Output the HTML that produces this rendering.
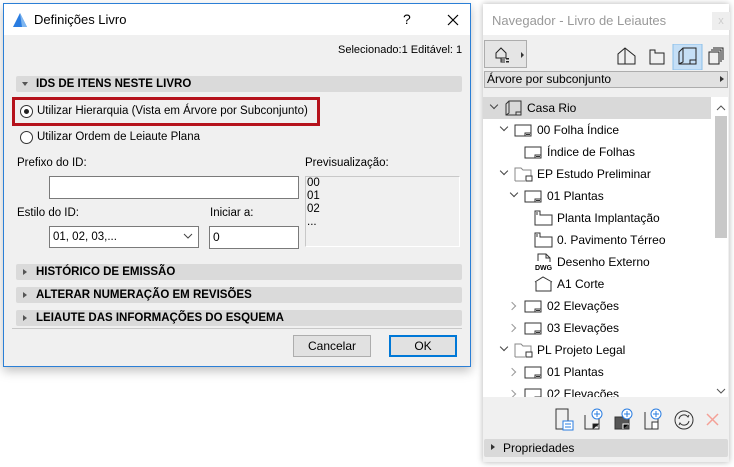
<!DOCTYPE html>
<html><head><meta charset="utf-8"><style>
*{margin:0;padding:0;box-sizing:border-box}
body{width:734px;height:467px;background:#fff;position:relative;overflow:hidden;font-family:"Liberation Sans",sans-serif;font-size:12px;color:#000}
.a{position:absolute}
.dl{font-size:11.5px}
.sec{position:absolute;left:16px;width:446px;height:16px;background:#dadada;border-radius:2px;font-weight:bold;font-size:11.5px;line-height:16px;padding-left:20px}
.sec:before{content:"";position:absolute;left:7px;top:5px;border-left:4px solid #555;border-top:3px solid transparent;border-bottom:3px solid transparent}
.sec.open:before{left:6px;top:6px;border-top:4px solid #555;border-left:3px solid transparent;border-right:3px solid transparent;border-bottom:0}
.inp{position:absolute;background:#fff;border:1px solid #7a7a7a}
.row{position:absolute;left:0;height:22px;line-height:22px;white-space:nowrap}
.chev{position:absolute;top:7px;width:6px;height:6px;border-right:1.3px solid #444;border-bottom:1.3px solid #444}
.dn{transform:rotate(45deg)}
.rt{transform:rotate(-45deg);border-color:#999}
</style></head><body>
<div class="a" style="left:3px;top:3px;width:468px;height:364px;border:1px solid #2b7fd6;background:#f0f0f0;box-shadow:0 4px 10px rgba(0,0,0,.25)">
 <div class="a" style="left:0;top:0;width:466px;height:31px;background:#fff"></div>
 <svg class="a" style="left:8px;top:8px" width="16" height="16"><path d="M1 15 L8 1 L15 15 Z" fill="#2a7de1"/><path d="M8 1 L15 15 L10 15 Z" fill="#7fb6f0"/></svg>
 <div class="a" style="left:30px;top:8px;font-size:13px">Definições Livro</div>
 <div class="a" style="left:399px;top:7px;font-size:14px">?</div>
 <svg class="a" style="left:443px;top:10px" width="12" height="12"><path d="M1 1L11 11M11 1L1 11" stroke="#000" stroke-width="1.2"/></svg>
</div>
<div class="a dl" style="left:338px;top:44px;font-size:11px">Selecionado:1 Editável: 1</div>
<div class="sec open" style="top:76px">IDS DE ITENS NESTE LIVRO</div>
<div class="a" style="left:12px;top:97px;width:308px;height:29px;border:3px solid #b5121b"></div>
<div class="a" style="left:20px;top:105px;width:13px;height:13px;border:1px solid #333;border-radius:50%;background:#fff"><div class="a" style="left:3px;top:3px;width:5px;height:5px;border-radius:50%;background:#222"></div></div>
<div class="a dl" style="left:37px;top:105px">Utilizar Hierarquia (Vista em Árvore por Subconjunto)</div>
<div class="a" style="left:20px;top:131px;width:13px;height:13px;border:1px solid #333;border-radius:50%;background:#fff"></div>
<div class="a dl" style="left:37px;top:131px">Utilizar Ordem de Leiaute Plana</div>
<div class="a dl" style="left:17px;top:157px">Prefixo do ID:</div>
<div class="a dl" style="left:305px;top:157px">Previsualização:</div>
<div class="inp" style="left:49px;top:176px;width:250px;height:23px"></div>
<div class="a" style="left:305px;top:176px;width:155px;height:71px;border:1px solid #c8c8c8;border-right-color:#fff;border-bottom-color:#fff;line-height:13px;padding-left:1px;font-size:11.5px">00<br>01<br>02<br>...</div>
<div class="a dl" style="left:17px;top:207px">Estilo do ID:</div>
<div class="a dl" style="left:210px;top:207px">Iniciar a:</div>
<div class="inp" style="left:49px;top:226px;width:150px;height:22px;line-height:20px;padding-left:3px;font-size:11.5px">01, 02, 03,...</div>
<svg class="a" style="left:183px;top:233px" width="10" height="6"><path d="M1 1L5 5L9 1" stroke="#444" fill="none"/></svg>
<div class="inp" style="left:209px;top:226px;width:90px;height:23px;line-height:21px;padding-left:3px">0</div>
<div class="sec" style="top:264px">HISTÓRICO DE EMISSÃO</div>
<div class="sec" style="top:287px">ALTERAR NUMERAÇÃO EM REVISÕES</div>
<div class="sec" style="top:310px">LEIAUTE DAS INFORMAÇÕES DO ESQUEMA</div>
<div class="a" style="left:12px;top:328px;width:450px;height:1px;background:#c8c8c8"></div>
<div class="a" style="left:293px;top:335px;width:78px;height:22px;border:1px solid #adadad;background:#e1e1e1;text-align:center;line-height:20px">Cancelar</div>
<div class="a" style="left:389px;top:335px;width:68px;height:22px;border:2px solid #0078d7;background:#e1e1e1;text-align:center;line-height:18px">OK</div>

<div class="a" style="left:483px;top:4px;width:246px;height:458px;background:#f0f0f0;box-shadow:0 0 6px rgba(0,0,0,.3)">
 <div class="a" style="left:0;top:0;width:246px;height:31px;background:#fff"></div>
 <div class="a" style="left:9px;top:9px;font-size:13px;color:#999">Navegador - Livro de Leiautes</div>
 <div class="a" style="left:229px;top:8px;width:18px;height:18px;background:#eee;color:#ccc;text-align:center;font-size:11px;line-height:18px">x</div>
 <div class="a" style="left:1px;top:36px;width:43px;height:28px;border:1px solid #adadad;background:#e5e5e5"></div>
 <svg class="a" style="left:10px;top:41px" width="32" height="20"><path d="M3 8L8 3L13 8V13H3Z M8 13V17H12 M8 15H12" stroke="#222" fill="none"/><rect x="13" y="13" width="3" height="1.5" fill="#222"/><rect x="13" y="16" width="3" height="1.5" fill="#222"/><path d="M28 7L31 10L28 13Z" fill="#333"/></svg>
 <svg class="a" style="left:132px;top:40px" width="110" height="26"><path d="M3 20V10L10 4L20 12V20Z M10 4V20" stroke="#222" fill="none"/><path d="M35 6H40V9H49V20H35Z" stroke="#222" fill="none"/><rect x="58" y="0" width="29" height="26" fill="#c5dff6" stroke="#8cbfe9"/><path d="M64 20V8L68 4H81V20Z M68 4V18L64 20 M75 20V16H81" stroke="#222" fill="none"/><path d="M94 8H104V20H94Z M96 6H106V18 M98 4H108V16" stroke="#222" fill="none"/></svg>
 <div class="a" style="left:1px;top:67px;width:244px;height:17px;border:1px solid #adadad;background:#e1e1e1;line-height:15px;padding-left:2px">Árvore por subconjunto</div>
 <div class="a" style="left:237px;top:72px;border-left:4px solid #333;border-top:3.5px solid transparent;border-bottom:3.5px solid transparent"></div>
 <div class="a" style="left:0;top:93px;width:230px;height:300px;background:#fff;overflow:hidden">
  <div class="a" style="left:0;top:0;width:228px;height:22px;background:#d9d9d9"></div>
  <div class="row" style="top:0;left:0;width:230px">
   <i class="chev dn" style="left:8px;top:5px"></i>
   <svg class="a" style="left:22px;top:3px" width="18" height="16"><path d="M1 15V4L4 1H16V15Z M4 1V13L1 15 M11 15V12H16" stroke="#333" fill="none"/></svg>
   <span class="a" style="left:44px">Casa Rio</span></div>
  <div class="row" style="top:22px"><i class="chev dn" style="left:18px;top:5px"></i><svg class="a" style="left:31px;top:5px" width="18" height="13"><path d="M1 1H17V12H1Z M11 12V9H17 M12 10.5H16" stroke="#333" fill="none"/></svg><span class="a" style="left:54px">00 Folha Índice</span></div>
  <div class="row" style="top:44px"><svg class="a" style="left:41px;top:5px" width="18" height="13"><path d="M1 1H17V12H1Z M11 12V9H17 M12 10.5H16" stroke="#333" fill="none"/></svg><span class="a" style="left:64px">Índice de Folhas</span></div>
  <div class="row" style="top:66px"><i class="chev dn" style="left:18px;top:5px"></i><svg class="a" style="left:31px;top:3px" width="20" height="16"><path d="M1 15V2H7L9 4H17V10 M1 15H11" stroke="#888" fill="none"/><rect x="12" y="10" width="6" height="5" stroke="#333" fill="none"/></svg><span class="a" style="left:54px">EP Estudo Preliminar</span></div>
  <div class="row" style="top:88px"><i class="chev dn" style="left:28px;top:5px"></i><svg class="a" style="left:41px;top:5px" width="18" height="13"><path d="M1 1H17V12H1Z M11 12V9H17 M12 10.5H16" stroke="#333" fill="none"/></svg><span class="a" style="left:64px">01 Plantas</span></div>
  <div class="row" style="top:110px"><svg class="a" style="left:51px;top:3px" width="20" height="16"><path d="M1 1H6V5H18V15H1Z M3 2V5" stroke="#333" fill="none"/></svg><span class="a" style="left:74px">Planta Implantação</span></div>
  <div class="row" style="top:132px"><svg class="a" style="left:51px;top:3px" width="20" height="16"><path d="M1 1H6V5H18V15H1Z M3 2V5" stroke="#333" fill="none"/></svg><span class="a" style="left:74px">0. Pavimento Térreo</span></div>
  <div class="row" style="top:154px"><svg class="a" style="left:52px;top:2px" width="18" height="18"><path d="M3 8V1H11L15 5V9 M11 1V5H15" stroke="#333" fill="none"/><text x="0" y="17" font-size="7" font-family="Liberation Sans" font-weight="bold">DWG</text></svg><span class="a" style="left:74px">Desenho Externo</span></div>
  <div class="row" style="top:176px"><svg class="a" style="left:51px;top:3px" width="20" height="16"><path d="M1 6L9 1L18 6 M2 6V15H17V6" stroke="#333" fill="none"/></svg><span class="a" style="left:74px">A1 Corte</span></div>
  <div class="row" style="top:198px"><i class="chev rt" style="left:26px;top:8px"></i><svg class="a" style="left:41px;top:5px" width="18" height="13"><path d="M1 1H17V12H1Z M11 12V9H17 M12 10.5H16" stroke="#333" fill="none"/></svg><span class="a" style="left:64px">02 Elevações</span></div>
  <div class="row" style="top:220px"><i class="chev rt" style="left:26px;top:8px"></i><svg class="a" style="left:41px;top:5px" width="18" height="13"><path d="M1 1H17V12H1Z M11 12V9H17 M12 10.5H16" stroke="#333" fill="none"/></svg><span class="a" style="left:64px">03 Elevações</span></div>
  <div class="row" style="top:242px"><i class="chev dn" style="left:18px;top:5px"></i><svg class="a" style="left:31px;top:3px" width="20" height="16"><path d="M1 15V2H7L9 4H17V10 M1 15H11" stroke="#888" fill="none"/><rect x="12" y="10" width="6" height="5" stroke="#333" fill="none"/></svg><span class="a" style="left:54px">PL Projeto Legal</span></div>
  <div class="row" style="top:264px"><i class="chev rt" style="left:26px;top:8px"></i><svg class="a" style="left:41px;top:5px" width="18" height="13"><path d="M1 1H17V12H1Z M11 12V9H17 M12 10.5H16" stroke="#333" fill="none"/></svg><span class="a" style="left:64px">01 Plantas</span></div>
  <div class="row" style="top:286px"><i class="chev rt" style="left:26px;top:8px"></i><svg class="a" style="left:41px;top:5px" width="18" height="13"><path d="M1 1H17V12H1Z M11 12V9H17 M12 10.5H16" stroke="#333" fill="none"/></svg><span class="a" style="left:64px">02 Elevações</span></div>
 </div>
 <div class="a" style="left:230px;top:93px;width:15px;height:300px;background:#fff"></div>
 <div class="a" style="left:232px;top:112px;width:12px;height:122px;background:#c8c8c8"></div>
 <svg class="a" style="left:233px;top:101px" width="10" height="6"><path d="M1 5L5 1L9 5" stroke="#555" fill="none"/></svg>
 <svg class="a" style="left:233px;top:384px" width="10" height="6"><path d="M1 1L5 5L9 1" stroke="#555" fill="none"/></svg>
 <svg class="a" style="left:70px;top:403px" width="170" height="26">
  <path d="M3 2H15V22H3Z" stroke="#333" fill="none"/><rect x="10" y="14" width="10" height="9" fill="#fff" stroke="#2a7de1"/><path d="M12 17H18M12 20H18" stroke="#2a7de1"/>
  <path d="M32 8V22H46V8" stroke="#333" fill="none"/><path d="M40 22V17H46 M41 19H45" stroke="#333"/><circle cx="44" cy="7" r="5" fill="#fff" stroke="#2a7de1"/><path d="M44 4V10M41 7H47" stroke="#2a7de1"/>
  <path d="M62 10H76V22H62Z" fill="#555" stroke="#333"/><path d="M70 22V17H76" stroke="#fff"/><circle cx="74" cy="7" r="5" fill="#fff" stroke="#2a7de1"/><path d="M74 4V10M71 7H77" stroke="#2a7de1"/>
  <path d="M92 5V22H105V10" stroke="#333" fill="none"/><rect x="99" y="15" width="6" height="7" stroke="#333" fill="#fff"/><circle cx="103" cy="7" r="5" fill="#fff" stroke="#2a7de1"/><path d="M103 4V10M100 7H106" stroke="#2a7de1"/>
  <circle cx="131" cy="13" r="9" fill="none" stroke="#333"/><path d="M126 12A5 5 0 0 1 135 10L136 8M136 14A5 5 0 0 1 127 16L126 18" stroke="#333" fill="none"/>
  <path d="M154 7L165 18M165 7L154 18" stroke="#f4a097" stroke-width="1.5"/>
 </svg>
 <div class="a" style="left:1px;top:435px;width:244px;height:18px;background:#d9d9d9;border-radius:2px;line-height:18px;padding-left:19px">Propriedades</div>
 <div class="a" style="left:8px;top:440px;border-left:4px solid #333;border-top:3.5px solid transparent;border-bottom:3.5px solid transparent"></div>
</div>
</body></html>
